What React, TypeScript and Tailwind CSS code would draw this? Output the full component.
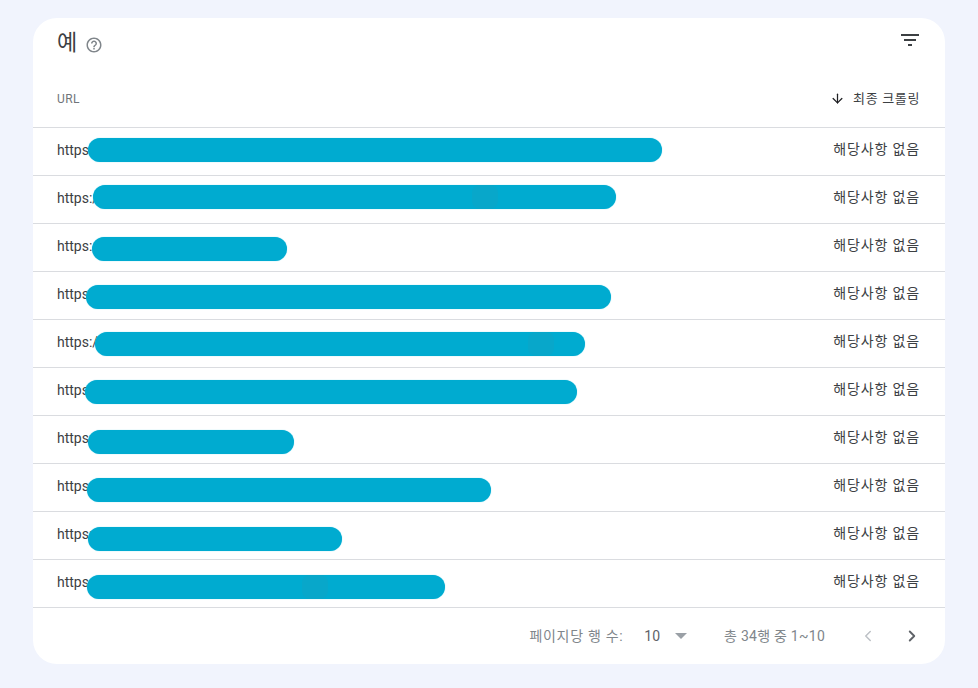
import React from 'react';
import { ArrowDown, ChevronLeft, ChevronRight } from 'lucide-react';

type Row = { left: number; width: number; top: number; visible: string; patch?: number };

const rows: Row[] = [
  { left: 55, width: 574, top: 10, visible: 'https://' },
  { left: 60, width: 523, top: 9, visible: 'https://', patch: 439 },
  { left: 59, width: 195, top: 13, visible: 'https://' },
  { left: 53, width: 525, top: 13, visible: 'https://' },
  { left: 62, width: 490, top: 12, visible: 'https://', patch: 495 },
  { left: 52, width: 492, top: 12, visible: 'https://' },
  { left: 55, width: 206, top: 14, visible: 'https://' },
  { left: 54, width: 404, top: 14, visible: 'https://' },
  { left: 55, width: 254, top: 15, visible: 'https://' },
  { left: 54, width: 358, top: 15, visible: 'https://', patch: 269 }
];

const font = "font-['Roboto','Noto_Sans_CJK_KR',sans-serif]";

function TableRow({ row }: { row: Row }) {
  return (
    <div className="relative flex h-12 items-start justify-between border-t border-[#dadce0] pl-6 pr-[25px] pt-[12px] text-sm leading-[20px] text-[#3c4043]">
      <span>{row.visible}</span>
      <span className="mt-[-1px] tracking-[0.85px]">해당사항 없음</span>
      <div
        className="absolute h-6 rounded-full bg-[#00abd0] shadow-[0_0_1px_#5fd0e8]"
        style={{ left: row.left, width: row.width, top: row.top }} />
      {row.patch !== undefined &&
      <div
        className="absolute h-6 w-[26px] rounded-[8px] bg-[#08a7ca]"
        style={{ left: row.patch, top: row.top }} />
      }
    </div>);
}

export default function App() {
  return (
    <div className={`flex h-[688px] w-[978px] items-start bg-[#f1f4fd] pl-[33px] pt-[18px] ${font}`}>
      <div className="h-[646px] w-[912px] overflow-hidden rounded-[24px] bg-white">
        <div className="flex h-[62px] items-start justify-between pl-6 pr-[25px] pt-[9px]">
          <div className="flex items-center gap-[8px]">
            <h2 className="text-[22px] leading-[32px] font-normal text-[#3c4043]">예</h2>
            <svg width="18" height="18" viewBox="0 0 24 24" className="mt-[3px] text-[#80868b]" fill="currentColor">
              <path d="M11 18h2v-2h-2v2zm1-16C6.48 2 2 6.48 2 12s4.48 10 10 10 10-4.48 10-10S17.52 2 12 2zm0 18c-4.41 0-8-3.59-8-8s3.59-8 8-8 8 3.59 8 8-3.59 8-8 8zm0-14c-2.21 0-4 1.79-4 4h2c0-1.1.9-2 2-2s2 .9 2 2c0 2-3 1.75-3 5h2c0-2.25 3-2.5 3-5 0-2.21-1.79-4-4-4z" />
            </svg>
          </div>
          <svg width="24" height="24" viewBox="0 0 24 24" className="mr-[-2px] mt-[1px] text-[#3c4043]" fill="currentColor">
            <path d="M10 18h4v-2h-4v2zM3 6v2h18V6H3zm3 7h12v-2H6v2z" />
          </svg>
        </div>
        <div className="flex h-[47px] items-center justify-between pb-[10px] pl-6 pr-[25px]">
          <span className="text-xs tracking-[0.4px] text-[#70757a]">URL</span>
          <span className="flex items-center gap-[8px] text-[13px] tracking-[0.65px] text-[#3c4043]">
            <ArrowDown size={15} strokeWidth={2} className="text-[#202124]" />
            최종 크롤링
          </span>
        </div>
        {rows.map((row, index) =>
        <TableRow row={row} key={index} />
        )}
        <div className="flex h-[57px] items-center justify-end border-t border-[#dadce0] pb-[1px] text-sm text-[#80868b]">
          <span className="tracking-[0.7px]">페이지당 행 수:</span>
          <span className="ml-[21px] text-[#5f6368]">10</span>
          <svg width="12" height="6" viewBox="0 0 12 6" className="ml-[15px] text-[#9aa0a6]" fill="currentColor">
            <path d="M0 0h12L6 6z" />
          </svg>
          <span className="ml-[37px] tracking-[0.25px]">총 34행 중 1~10</span>
          <ChevronLeft size={18} className="ml-[34px] text-[#bdc1c6]" />
          <ChevronRight size={18} strokeWidth={2.5} className="ml-[26px] mr-[24px] text-[#5f6368]" />
        </div>
      </div>
    </div>);
}
